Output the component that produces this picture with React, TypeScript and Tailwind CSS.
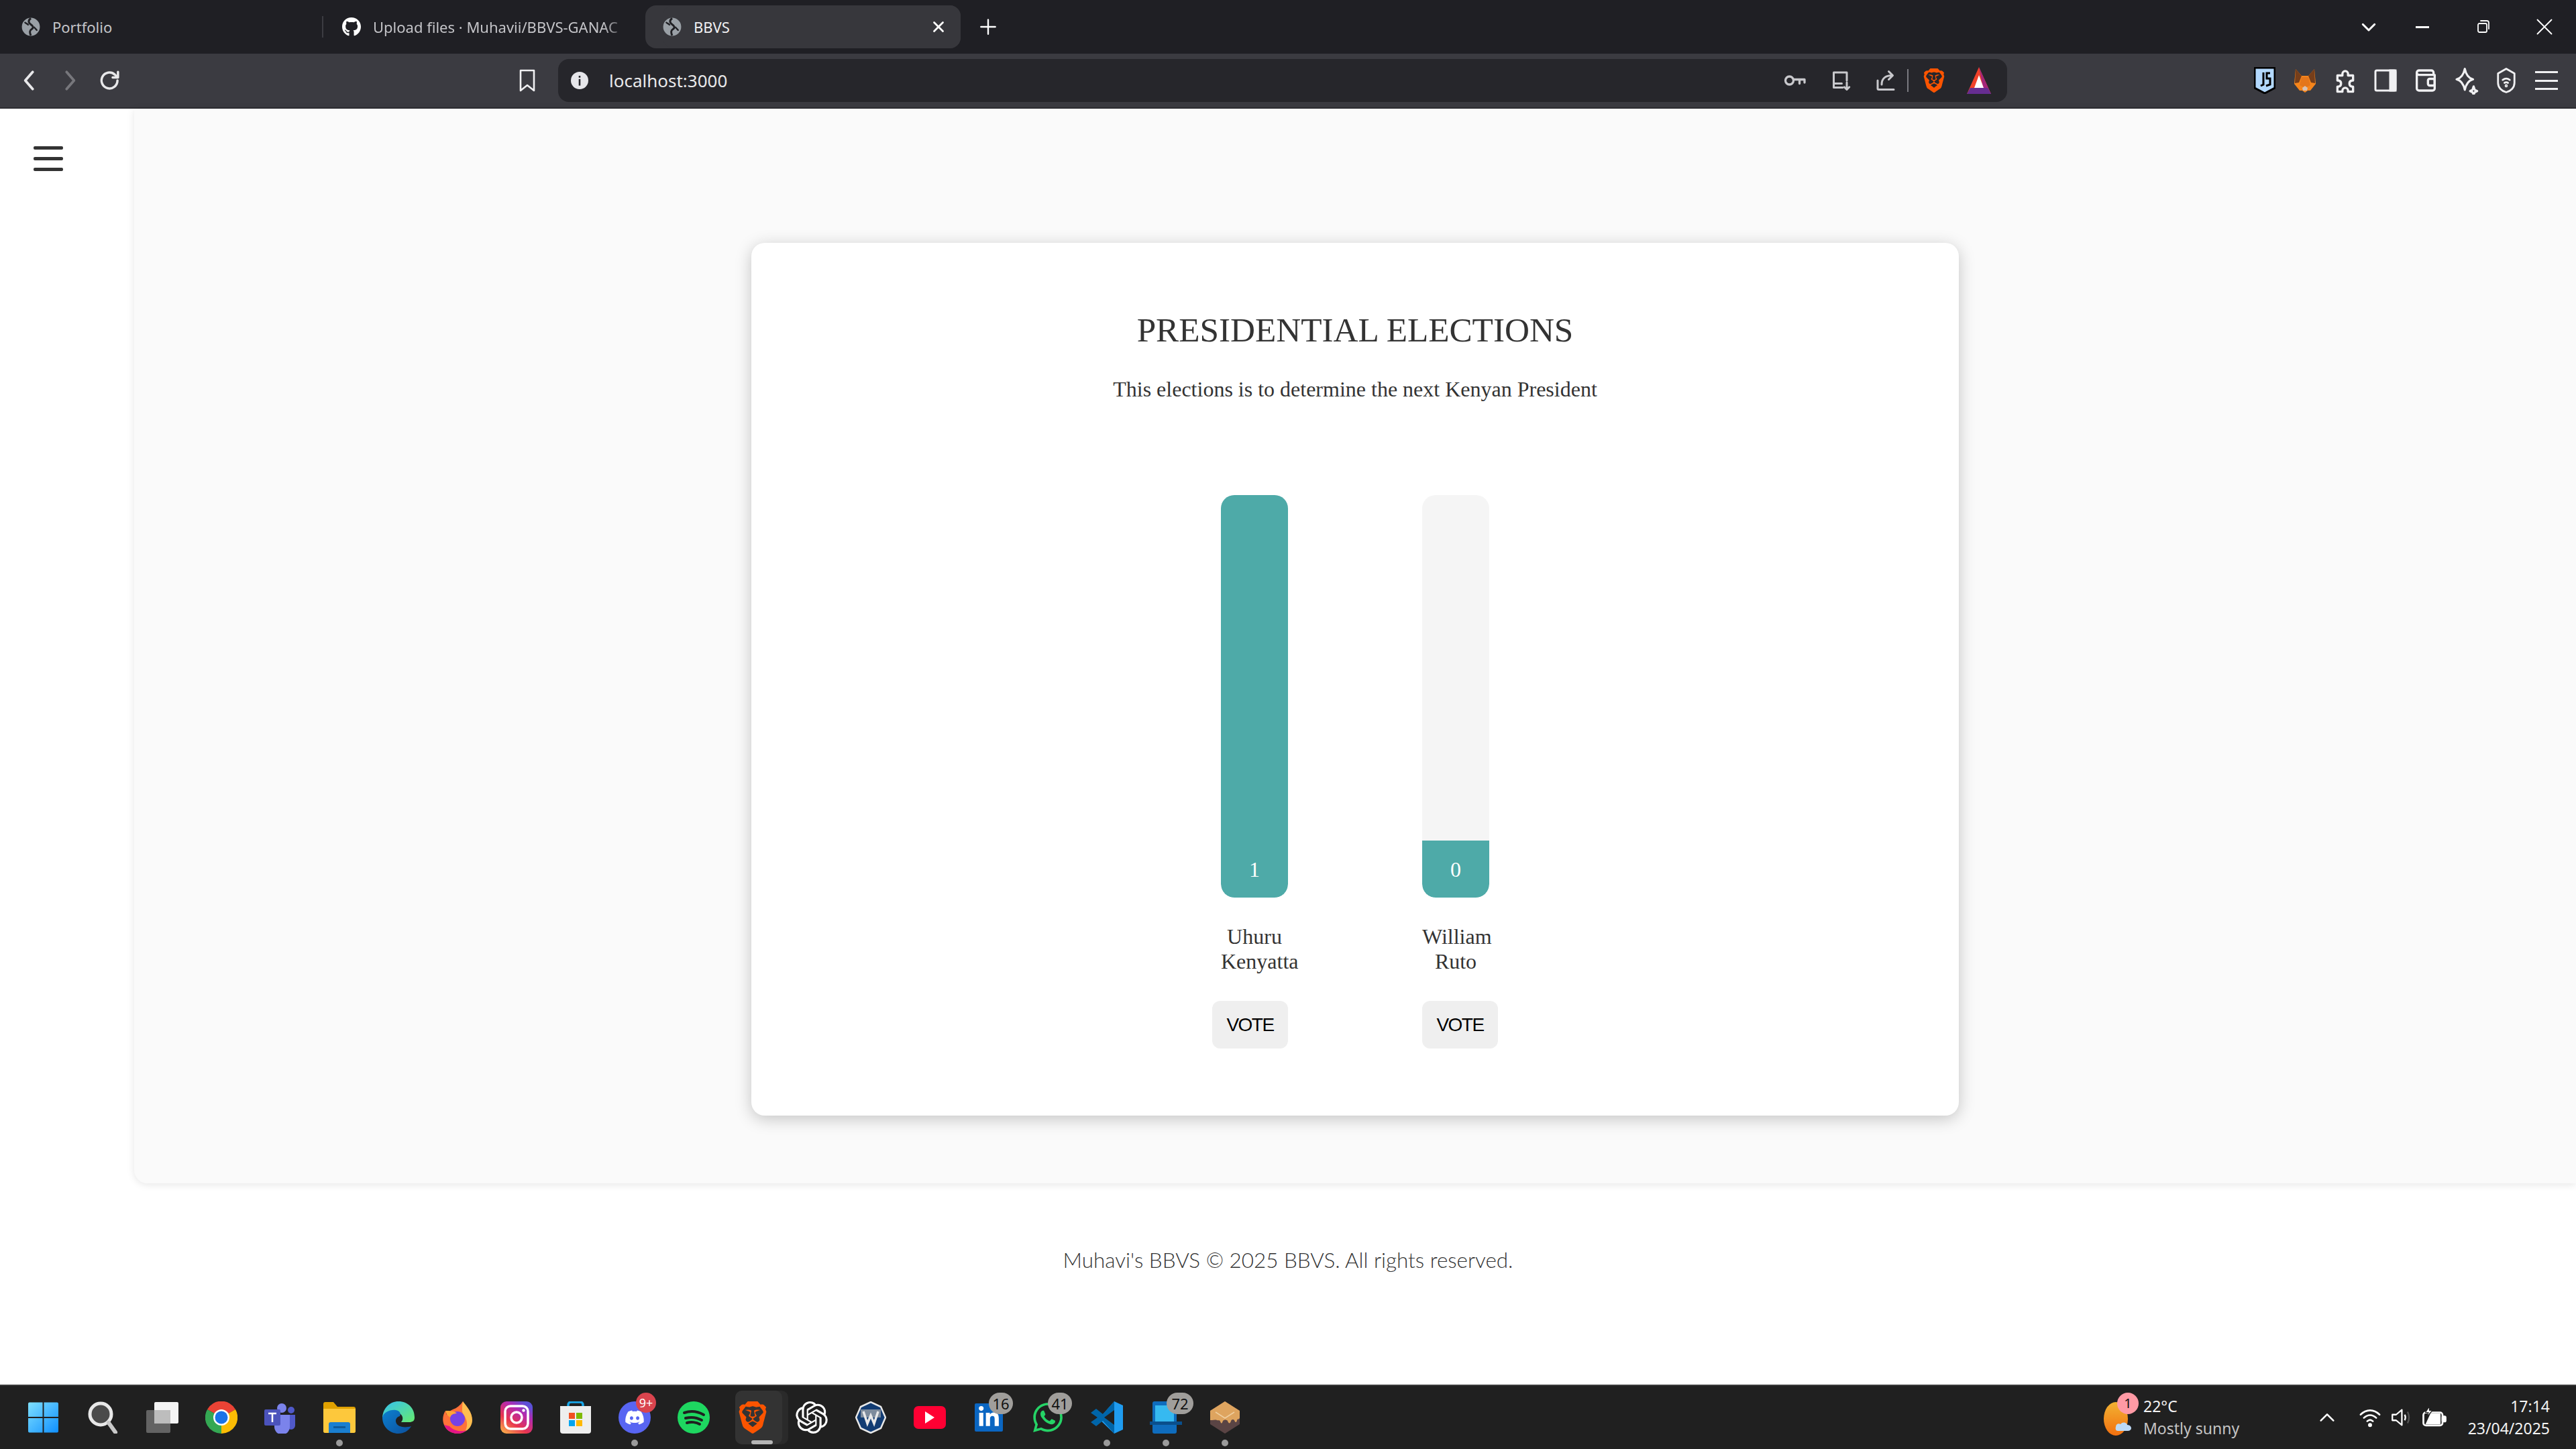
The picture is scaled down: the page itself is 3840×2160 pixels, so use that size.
import React from "react";
import { FaGithub, FaDiscord, FaLinkedinIn, FaWhatsapp } from "react-icons/fa";
import { SiOpenai, SiBrave } from "react-icons/si";

const ui = { fontFamily: '"Noto Sans", "Open Sans", sans-serif' };
const serif = { fontFamily: '"Liberation Serif", serif' };

function Globe({ c = "#9aa0a6" }: { c?: string }) {
  return (
    <svg width="28" height="28" viewBox="0 0 24 24">
      <circle cx="12" cy="12" r="11.5" fill={c} />
      <path d="M12 1C8 4 9 7 12 9c3 2 4 4 1 6-2 1-3 4-1 8" fill="none" stroke="#202024" strokeWidth="2.6" />
      <path d="M4 6c2 2 4 2 5 4M20 17c-1-2-3-3-4-5" fill="none" stroke="#202024" strokeWidth="2" />
    </svg>
  );
}

function Stroke({ children, w = 36, vb = 24, c = "#e8e8ea", sw = 2 }: { children: React.ReactNode; w?: number; vb?: number; c?: string; sw?: number }) {
  return (
    <svg width={w} height={w} viewBox={`0 0 ${vb} ${vb}`} fill="none" stroke={c} strokeWidth={sw} strokeLinecap="round" strokeLinejoin="round">
      {children}
    </svg>
  );
}

function Tab({ w, active, icon, text, fade, close }: { w: string; active?: boolean; icon: React.ReactNode; text: string; fade?: boolean; close?: boolean }) {
  return (
    <div className={`${w} h-[64px] flex items-center shrink-0 rounded-[16px] pr-[20px] ${active ? "bg-[#37373c]" : ""}`}>
      <div className="w-[28px] h-[28px] shrink-0 flex items-center justify-center">{icon}</div>
      <span
        className={`ml-[18px] text-[22px] whitespace-nowrap flex-1 ${active ? "text-[#f0f0f2]" : "text-[#c4c4c8]"}`}
        style={fade ? { ...ui, maskImage: "linear-gradient(90deg,#000 90%,transparent)" } : ui}
      >
        {text}
      </span>
      {close && (
        <Stroke w={26} sw={2.6} c="#ffffff">
          <path d="M6 6l12 12M18 6L6 18" />
        </Stroke>
      )}
    </div>
  );
}

function TB({ children, cls = "" }: { children: React.ReactNode; cls?: string }) {
  return <div className={`w-[60px] h-[60px] shrink-0 flex items-center justify-center ${cls}`}>{children}</div>;
}

function Candidate({ name, votes, fill, align }: { name: string; votes: string; fill: string; align: string }) {
  return (
    <div className="w-[100px] flex flex-col" style={serif}>
      <div className="h-[600px] w-[100px] rounded-[20px] bg-[#f5f5f5] overflow-hidden flex flex-col justify-end">
        <div className={`${fill} bg-[#4eaaa8] rounded-b-[20px] flex flex-col justify-end text-[32px] text-white`}>
          <div className="h-[85px] flex items-center justify-center">{votes}</div>
        </div>
      </div>
      <div className="mt-[40px] text-center text-[32px] leading-[37px] text-[#333333]">{name}</div>
      <button className={`mt-[40px] w-[113px] h-[71px] rounded-[12px] bg-[#efefef] text-[28px] tracking-[-1.5px] text-black shrink-0 ${align}`} style={{ fontFamily: '"Liberation Sans", sans-serif' }}>
        VOTE
      </button>
    </div>
  );
}

function Item({ children, dot, badge, badgeCls, active }: { children: React.ReactNode; dot?: boolean; badge?: string; badgeCls?: string; active?: boolean }) {
  return (
    <div className="w-[88px] h-[94px] shrink-0 relative flex items-center justify-center">
      {active && (
        <>
          <div className="absolute left-[18px] top-[7px] w-[79px] h-[80px] rounded-[10px] bg-[#2a2a2a]" />
          <div className="absolute left-[18px] top-[7px] w-[70px] h-[80px] rounded-[10px] bg-[#333333]" />
          <div className="absolute left-[42px] top-[81px] w-[32px] h-[6px] rounded-[3px] bg-[#b5b5b5]" />
        </>
      )}
      <div className="relative w-[48px] h-[48px] flex items-center justify-center">{children}</div>
      {dot && <div className="absolute left-[39px] top-[80px] w-[10px] h-[10px] rounded-full bg-[#9a9a9a]" />}
      {badge && (
        <div className={`absolute top-[10px] rounded-full flex items-center justify-center ${badgeCls}`} style={ui}>
          {badge}
        </div>
      )}
    </div>
  );
}

export default function App() {
  return (
    <div className="w-[3840px] h-[2160px] flex flex-col overflow-hidden bg-white">
      {/* tab strip */}
      <div className="h-[80px] shrink-0 bg-[#1f1f24] flex items-center pl-[32px]">
        <Tab w="w-[448px]" icon={<Globe />} text="Portfolio" />
        <div className="w-[2px] h-[32px] bg-[#3c3c42] shrink-0" />
        <div className="w-[480px] shrink-0 pl-[28px] pr-[24px]">
          <Tab w="w-full !pr-0" icon={<FaGithub size={32} color="#fff" />} text="Upload files · Muhavii/BBVS-GANAC" fade />
        </div>
        <div className="w-[470px] shrink-0 pl-[26px] rounded-[16px] bg-[#37373c]">
          <Tab w="w-full" active icon={<Globe />} text="BBVS" close />
        </div>
        <div className="ml-[21px] w-[40px] h-[40px] flex items-center justify-center">
          <Stroke w={32} c="#fff" sw={1.8}>
            <path d="M12 4v16M4 12h16" />
          </Stroke>
        </div>
        <div className="ml-auto flex items-center pr-[33px]">
          <div className="w-[40px] flex justify-center mr-[50px]">
            <Stroke w={30} c="#fff" sw={2.4}>
              <path d="M5 9l7 7 7-7" />
            </Stroke>
          </div>
          <div className="w-[20px] h-[3px] bg-white mr-[69px]" />
          <div className="mr-[65px]">
            <Stroke w={24} c="#fff" sw={1.8}>
              <rect x="4" y="7" width="13" height="13" rx="2" />
              <path d="M8 3h9a3 3 0 0 1 3 3v9" />
            </Stroke>
          </div>
          <Stroke w={28} c="#fff" sw={1.6}>
            <path d="M3 3l18 18M21 3L3 21" />
          </Stroke>
        </div>
      </div>

      {/* toolbar */}
      <div className="h-[82px] shrink-0 bg-[#3b3b41] border-b-2 border-[#2e2e33] flex items-center pl-[14px]">
        <TB>
          <Stroke w={38} sw={2.4}>
            <path d="M15 4l-7 8 7 8" />
          </Stroke>
        </TB>
        <TB>
          <Stroke w={38} c="#77777c" sw={2.4}>
            <path d="M9 4l7 8-7 8" />
          </Stroke>
        </TB>
        <TB>
          <Stroke w={38} sw={2.2}>
            <path d="M19 12a7.5 7.5 0 1 1-2.5-5.6L19 9" />
            <path d="M19.5 4v5.2h-5" />
          </Stroke>
        </TB>
        <TB cls="ml-[562px]">
          <svg width="26" height="34" viewBox="0 0 26 34" fill="none" stroke="#f0f0f2" strokeWidth="2.6" strokeLinejoin="round">
            <path d="M3 2h20v30l-10-8-10 8z" />
          </svg>
        </TB>
        <div className="ml-[16px] w-[2160px] h-[64px] rounded-[16px] bg-[#26262b] flex items-center pl-[19px] pr-[24px]">
          <svg width="26" height="26" viewBox="0 0 24 24">
            <circle cx="12" cy="12" r="12" fill="#e6e6ea" />
            <rect x="10.8" y="10" width="2.4" height="9" fill="#26262b" />
            <rect x="10.8" y="5.5" width="2.4" height="2.6" fill="#26262b" />
          </svg>
          <span className="ml-[31px] text-[26px] text-[#e8e8ea]" style={ui}>localhost:3000</span>
          <div className="ml-auto flex items-center">
            <Stroke w={36} c="#c8c8cc" sw={2.2}>
              <circle cx="7" cy="12" r="4" />
              <path d="M11 11h11v3M17 11v4" />
            </Stroke>
            <div className="ml-[33px]">
              <Stroke w={36} c="#c8c8cc" sw={2}>
                <path d="M14 19H5V4h13v8M5 15h8M18 14v7M15.5 18.5L18 21l2.5-2.5" />
              </Stroke>
            </div>
            <div className="ml-[31px]">
              <Stroke w={36} c="#c8c8cc" sw={2}>
                <path d="M4 12v8a1 1 0 0 0 1 1h15M8 16c0-6 4-9 10-9M15 3l4 4-4 4" />
              </Stroke>
            </div>
            <div className="w-[2px] h-[34px] bg-[#7a7a80] ml-[14px]" />
            <div className="ml-[20px] w-[36px] h-[48px] flex items-center justify-center">
              <SiBrave size={42} color="#fb5400" />
            </div>
            <svg className="ml-[31px]" width="36" height="40" viewBox="0 0 36 40">
              <path d="M18 0L36 40H0z" fill="#f0412a" />
              <path d="M18 0L36 40H26z" fill="#a3267a" />
              <path d="M0 40l5-9h26l5 9z" fill="#662d91" />
              <path d="M18 12l7 19H11z" fill="#fff" />
            </svg>
          </div>
        </div>
        <div className="ml-[354px] flex items-center">
          <TB>
            <svg width="32" height="40" viewBox="0 0 32 40">
              <path d="M1 1h30v30L16 39 1 31z" fill="#b3d9ff" stroke="#000" strokeWidth="3" />
              <path d="M14 8v18l-4 2M24 9h-5v8h5v9l-6 2" fill="none" stroke="#000" strokeWidth="3" />
            </svg>
          </TB>
          <TB>
            <svg width="34" height="38" viewBox="0 0 34 38">
              <path d="M3 2l9 10h10l9-10 2 22-8 10h-4l-4 3-4-3H9L1 24z" fill="#f6851b" />
              <path d="M3 2l9 10-4 10-6 1zM31 2l-9 10 4 10 6 1z" fill="#763e1a" />
              <path d="M12 14h10l3 12-8 4-8-4z" fill="#e4761b" />
              <path d="M13 30l4-3 4 3-1 4h-6z" fill="#d7c1b3" />
            </svg>
          </TB>
          <TB>
            <Stroke w={40} sw={2} c="#f0f0f2">
              <path d="M9.5 6a2.5 2.5 0 0 1 5 0v1.5H19v4.5h-1a2.8 2.8 0 0 0 0 5.5h1V22h-4.5v-1a2.5 2.5 0 0 0-5 0v1H5v-4.5h1a2.8 2.8 0 0 0 0-5.5H5V7.5h4.5z" />
            </Stroke>
          </TB>
          <TB>
            <svg width="34" height="34" viewBox="0 0 34 34" fill="none" stroke="#f0f0f2" strokeWidth="3">
              <rect x="2" y="2" width="30" height="30" rx="2" />
              <rect x="24" y="2" width="8" height="30" fill="#f0f0f2" />
            </svg>
          </TB>
          <TB>
            <Stroke w={40} sw={2} c="#f0f0f2">
              <path d="M19 7H6a2 2 0 0 1 0-4h11a2 2 0 0 1 2 2zM4 5v14a2 2 0 0 0 2 2h12a2 2 0 0 0 2-2V7" />
              <rect x="14" y="10.5" width="6" height="6" rx="1.5" />
            </Stroke>
          </TB>
          <TB>
            <Stroke w={42} sw={1.8} c="#f0f0f2">
              <path d="M11 2c1 5 3 8 7 9-4 1-6 4-7 9-1-5-3-8-7-9 4-1 6-4 7-9zM18.5 17l1 3 2 1-2 1-1 2-1-2-2-1 2-1z" />
            </Stroke>
          </TB>
          <TB>
            <Stroke w={42} sw={1.6} c="#f0f0f2">
              <path d="M12 2l7 4v8c0 4-3 7-7 8-4-1-7-4-7-8V6z" />
              <path d="M9 11.5c2-1.5 4-1.5 6 0M10.5 14c1-.7 2-.7 3 0" />
              <circle cx="12" cy="16.5" r="0.5" />
            </Stroke>
          </TB>
          <TB>
            <div className="w-[34px] h-[28px] flex flex-col justify-between">
              <div className="h-[3px] bg-[#f0f0f2]" />
              <div className="h-[3px] bg-[#f0f0f2]" />
              <div className="h-[3px] bg-[#f0f0f2]" />
            </div>
          </TB>
        </div>
      </div>

      {/* page */}
      <div className="h-[1602px] shrink-0 flex">
        <div className="w-[200px] shrink-0 pt-[56px] pl-[50px]">
          <div className="w-[44px] flex flex-col gap-[11px]">
            <div className="h-[5px] rounded-[2px] bg-[#333333]" />
            <div className="h-[5px] rounded-[2px] bg-[#333333]" />
            <div className="h-[5px] rounded-[2px] bg-[#333333]" />
          </div>
        </div>
        <div className="flex-1 bg-[#fafafa] rounded-bl-[20px] shadow-[0_2px_12px_rgba(0,0,0,0.1)] pt-[200px] flex justify-center">
          <div className="w-[1800px] h-[1301px] bg-white rounded-[20px] shadow-[0_5px_25px_rgba(0,0,0,0.22)] flex flex-col items-center pt-[96px]" style={serif}>
            <h1 className="text-[51.2px] leading-[68px] text-[#333333]">PRESIDENTIAL ELECTIONS</h1>
            <p className="mt-[36px] text-[32px] leading-[37px] text-[#333333]">This elections is to determine the next Kenyan President</p>
            <div className="mt-[139px] flex justify-center gap-[200px]">
              <Candidate name="Uhuru Kenyatta" votes="1" fill="h-full" align="self-end" />
              <Candidate name="William Ruto" votes="0" fill="h-[85px]" align="self-start" />
            </div>
          </div>
        </div>
      </div>

      {/* footer */}
      <div className="flex-1 flex justify-center pt-[94px]">
        <span className="text-[31.4px] leading-[40px] font-light text-[#333333]" style={{ fontFamily: 'Lato, sans-serif' }}>
          Muhavi's BBVS © 2025 BBVS. All rights reserved.
        </span>
      </div>

      {/* taskbar */}
      <div className="h-[96px] shrink-0 bg-[#202020] border-t-2 border-[#3a3a3a] flex items-center pl-[22px]">
        <Item>
          <svg width="46" height="46" viewBox="0 0 46 46" className="mr-[3px]">
            <defs>
              <linearGradient id="w1" x1="0" y1="0" x2="1" y2="1">
                <stop offset="0" stopColor="#7fe0ff" />
                <stop offset="1" stopColor="#0f8fff" />
              </linearGradient>
            </defs>
            <path d="M0 2a2 2 0 0 1 2-2h20v22H0zM24 0h20a2 2 0 0 1 2 2v20H24zM0 24h22v22H2a2 2 0 0 1-2-2zM24 24h22v20a2 2 0 0 1-2 2H24z" fill="url(#w1)" />
          </svg>
        </Item>
        <Item>
          <svg width="46" height="48" viewBox="0 0 46 48">
            <circle cx="19" cy="19" r="16" fill="#4a4a4a" stroke="#e8e8e8" strokeWidth="5" />
            <path d="M31 32l10 14" stroke="#c9c9c9" strokeWidth="6" strokeLinecap="round" />
          </svg>
        </Item>
        <Item>
          <svg width="48" height="46" viewBox="0 0 48 46">
            <rect x="12" y="0" width="36" height="32" rx="2" fill="#f4f4f4" />
            <rect x="0" y="12" width="36" height="34" rx="2" fill="#6a6a6a" fillOpacity="0.9" />
            <rect x="12" y="12" width="24" height="20" fill="#bdbdbd" />
          </svg>
        </Item>
        <Item>
          <svg width="48" height="48" viewBox="0 0 48 48">
            <path d="M24 24L3 12A24 24 0 0 1 45 12z" fill="#ea4335" />
            <path d="M24 24L3 12A24 24 0 0 0 24 48z" fill="#34a853" />
            <path d="M24 24L45 12A24 24 0 0 1 24 48z" fill="#fbbc04" />
            <circle cx="24" cy="24" r="12" fill="#fff" />
            <circle cx="24" cy="24" r="9.5" fill="#1a73e8" />
          </svg>
        </Item>
        <Item>
          <svg width="48" height="48" viewBox="0 0 48 48">
            <circle cx="26" cy="10" r="7" fill="#7b83eb" />
            <circle cx="40" cy="13" r="5" fill="#5059c9" />
            <path d="M32 20h14v16a6 6 0 0 1-12 0z" fill="#5059c9" />
            <path d="M15 20h23v18a11 11 0 0 1-23 0z" fill="#7b83eb" />
            <rect x="0" y="12" width="24" height="24" rx="2" fill="#4b53bc" />
            <path d="M6 18h12M12 18v13" stroke="#fff" strokeWidth="2.5" />
          </svg>
        </Item>
        <Item dot>
          <svg width="48" height="46" viewBox="0 0 48 46">
            <path d="M0 3a3 3 0 0 1 3-3h12l6 7h24a3 3 0 0 1 3 3v33a3 3 0 0 1-3 3H3a3 3 0 0 1-3-3z" fill="#e0a100" />
            <path d="M0 10h48v33a3 3 0 0 1-3 3H3a3 3 0 0 1-3-3z" fill="#fdc83c" />
            <path d="M8 46V33a3 3 0 0 1 3-3h26a3 3 0 0 1 3 3v13z" fill="#1a7fd0" />
            <rect x="15" y="36" width="18" height="3" fill="#0f5a9a" />
          </svg>
        </Item>
        <Item>
          <svg width="48" height="48" viewBox="0 0 48 48">
            <defs>
              <linearGradient id="e1" x1="0" y1="0" x2="1" y2="1">
                <stop offset="0" stopColor="#35c1f1" />
                <stop offset="1" stopColor="#66eb6e" />
              </linearGradient>
              <linearGradient id="e2" x1="0" y1="0" x2="1" y2="1">
                <stop offset="0" stopColor="#0c80d0" />
                <stop offset="1" stopColor="#0c4f9c" />
              </linearGradient>
            </defs>
            <path d="M24 0c14 0 24 10 24 24 0 5-3 7-8 7H28c4-4 3-12-5-14C13 16 5 20 0 24 1 10 11 0 24 0z" fill="url(#e1)" />
            <path d="M0 24c2-8 11-12 20-11 6 1 8 5 6 9-4 1-8 5-5 11 3 5 12 7 22 4-4 7-11 11-19 11C11 48 0 38 0 24z" fill="url(#e2)" />
          </svg>
        </Item>
        <Item>
          <svg width="44" height="48" viewBox="0 0 44 48">
            <path d="M30 0c2 6 6 10 10 15 4 6 4 13 2 19-3 8-11 14-20 14S5 43 2 35C-1 28 0 20 4 14l2 6c2-4 5-6 9-8 6-2 11-6 15-12z" fill="#ff7139" />
            <path d="M30 0c6 8 14 16 14 28 0 8-5 14-11 17 4-6 4-14 1-20-2-5-5-6-5-12 0-5 0-9 1-13z" fill="#ffbd4f" />
            <circle cx="22" cy="26" r="11" fill="#7542e5" />
            <path d="M4 14c6 0 14 0 17 4-5 0-9 2-10 6-3-2-6-5-7-10z" fill="#ffa436" />
            <path d="M2 35c3 8 11 13 20 13 6 0 10-2 14-5-8 3-20 1-26-6z" fill="#e31587" />
          </svg>
        </Item>
        <Item>
          <svg width="48" height="48" viewBox="0 0 48 48">
            <defs>
              <linearGradient id="i1" x1="0" y1="1" x2="0.7" y2="0">
                <stop offset="0" stopColor="#fdc14a" />
                <stop offset="0.4" stopColor="#e8344f" />
                <stop offset="0.75" stopColor="#b32bb0" />
                <stop offset="1" stopColor="#5b51d8" />
              </linearGradient>
            </defs>
            <rect width="48" height="48" rx="9" fill="url(#i1)" />
            <rect x="7" y="7" width="34" height="34" rx="8" fill="none" stroke="#fff" strokeWidth="3.5" />
            <circle cx="24" cy="24" r="8" fill="none" stroke="#fff" strokeWidth="3.5" />
            <circle cx="34.5" cy="13.5" r="2.2" fill="#fff" />
          </svg>
        </Item>
        <Item>
          <svg width="46" height="48" viewBox="0 0 46 48">
            <path d="M12 11V5a4 4 0 0 1 4-4h14a4 4 0 0 1 4 4v6" fill="none" stroke="#18a6e8" strokeWidth="3.5" />
            <path d="M0 7h46v37a4 4 0 0 1-4 4H4a4 4 0 0 1-4-4z" fill="#eeeeee" />
            <rect x="13" y="17" width="9" height="9" fill="#f25022" />
            <rect x="24" y="17" width="9" height="9" fill="#7fba00" />
            <rect x="13" y="28" width="9" height="9" fill="#00a4ef" />
            <rect x="24" y="28" width="9" height="9" fill="#ffb900" />
          </svg>
        </Item>
        <Item dot badge="9+" badgeCls="left-[46px] w-[30px] h-[30px] bg-[#d9444e] text-white text-[18px] leading-none">
          <div className="w-[48px] h-[48px] rounded-full bg-[#5865f2] flex items-center justify-center">
            <FaDiscord size={30} color="#fff" />
          </div>
        </Item>
        <Item>
          <svg width="48" height="48" viewBox="0 0 48 48">
            <circle cx="24" cy="24" r="24" fill="#1ed760" />
            <path d="M10 17c9-3 20-2 29 3M12 25c8-2 17-1 24 3M14 32c6-2 14-1 19 2" fill="none" stroke="#202020" strokeWidth="4" strokeLinecap="round" />
          </svg>
        </Item>
        <Item active>
          <SiBrave size={48} color="#fb5400" />
        </Item>
        <Item>
          <SiOpenai size={48} color="#fff" />
        </Item>
        <Item>
          <svg width="46" height="48" viewBox="0 0 46 48">
            <path d="M23 1l15 7 7 16-7 16-15 7-15-7-7-16 7-16z" fill="#123c73" stroke="#e8e8e8" strokeWidth="2.5" />
            <path d="M8 12h30v12H8z" fill="#7d8b9c" />
            <path d="M12 15l6 18 5-12 5 12 6-18" fill="none" stroke="#e8e8e8" strokeWidth="3.5" />
          </svg>
        </Item>
        <Item>
          <div className="w-[48px] h-[34px] rounded-[7px] bg-[#ff0033] flex items-center justify-center">
            <svg width="14" height="18" viewBox="0 0 14 18">
              <path d="M0 0l14 9-14 9z" fill="#fff" />
            </svg>
          </div>
        </Item>
        <Item badge="16" badgeCls="left-[44px] w-[36px] h-[32px] bg-[#a09e9b] text-[#111] text-[22px] leading-none">
          <div className="w-[42px] h-[42px] bg-[#0a66c2] rounded-[2px] flex items-center justify-center">
            <FaLinkedinIn size={34} color="#fff" />
          </div>
        </Item>
        <Item badge="41" badgeCls="left-[44px] w-[36px] h-[32px] bg-[#a09e9b] text-[#111] text-[22px] leading-none">
          <FaWhatsapp size={50} color="#25d366" />
        </Item>
        <Item dot>
          <svg width="48" height="48" viewBox="0 0 48 48">
            <path d="M35 0l13 6v36l-13 6L12 26z" fill="#1f9cf0" />
            <path d="M35 0v48L18 29 8 37l-8-6 10-7L0 17l8-6 10 8z" fill="#0065a9" />
            <path d="M35 13L20 24l15 11z" fill="#202020" />
          </svg>
        </Item>
        <Item dot badge="72" badgeCls="left-[45px] w-[40px] h-[32px] bg-[#a09e9b] text-[#111] text-[22px] leading-none">
          <svg width="48" height="48" viewBox="0 0 48 48">
            <rect x="4" y="0" width="36" height="48" rx="3" fill="#0f6cbd" />
            <rect x="8" y="6" width="28" height="26" fill="#36b9f0" />
            <rect x="0" y="30" width="48" height="5" fill="#0a4f8c" />
          </svg>
        </Item>
        <Item dot>
          <svg width="44" height="48" viewBox="0 0 44 48">
            <path d="M22 0l22 14v20L22 48 0 34V14z" fill="#5a4444" />
            <path d="M22 0l22 14v11c-2 3-3 0-4 3-1 5-3 3-4 0-2-2-4-1-5 1-1 5-4 4-5 0-2-2-5-2-7 0-1 3-2 6-4 1-1-3-3-1-5-2-3-1-5 0-7 0-1 0-3 0-3 0V14z" fill="#dea45f" />
            <path d="M8 16l14 9 14-9" fill="none" stroke="#efcfa0" strokeWidth="1.5" />
          </svg>
        </Item>

        {/* tray */}
        <div className="ml-[1266px] w-[300px] flex items-center relative text-[#f2f2f2]" style={ui}>
          <svg width="42" height="60" viewBox="0 0 42 60" className="shrink-0 mt-[4px]">
            <defs>
              <linearGradient id="s1" x1="0" y1="0" x2="0" y2="1">
                <stop offset="0" stopColor="#f2b233" />
                <stop offset="1" stopColor="#f2700f" />
              </linearGradient>
            </defs>
            <ellipse cx="18" cy="30" rx="18" ry="25" fill="url(#s1)" />
            <path d="M18 42c0-4 4-6 7-4 3-4 9-3 10 1 4 0 6 3 6 5s-2 4-5 4H21c-3 0-4-3-3-6z" fill="#bcd9f5" />
          </svg>
          <div className="absolute left-[20px] top-[-4px] w-[32px] h-[32px] rounded-full bg-[#ff9aa5] text-[#111] text-[20px] flex items-center justify-center leading-none">1</div>
          <div className="ml-[17px] flex flex-col">
            <span className="text-[23px] leading-[33px]">22°C</span>
            <span className="text-[23px] leading-[33px] text-[#c4c4c4]">Mostly sunny</span>
          </div>
        </div>
        <div className="w-[66px] flex justify-center">
          <Stroke w={28} c="#fff" sw={2.2}>
            <path d="M4 16l8-8 8 8" />
          </Stroke>
        </div>
        <div className="ml-[8px] w-[46px] flex justify-center">
          <svg width="34" height="34" viewBox="0 0 24 24" fill="none" stroke="#fff" strokeWidth="1.8" strokeLinecap="round">
            <path d="M2 9c6-6 14-6 20 0M5.5 12.5c4-4 9-4 13 0M9 16c2-2 4-2 6 0" />
            <circle cx="12" cy="20" r="1.2" fill="#fff" />
          </svg>
        </div>
        <div className="w-[46px] flex justify-center">
          <svg width="34" height="34" viewBox="0 0 24 24" fill="none" stroke="#fff" strokeWidth="1.6" strokeLinejoin="round">
            <path d="M3 9v6h4l6 5V4L7 9z" />
            <path d="M16 9c1 2 1 4 0 6" />
            <path d="M19 6c2 4 2 8 0 12" stroke="#555" />
          </svg>
        </div>
        <div className="ml-[4px] w-[46px] flex justify-center">
          <svg width="36" height="36" viewBox="0 0 24 24" fill="none" stroke="#fff" strokeWidth="1.8" strokeLinejoin="round">
            <rect x="1" y="7" width="19" height="13" rx="2.5" />
            <rect x="20" y="11" width="3" height="5" rx="1" fill="#fff" />
            <path d="M3 19L8 8h10v11z" fill="#fff" stroke="none" />
            <path d="M7 1L3 7h3l-2 5 6-7H7z" fill="#fff" stroke="#202020" strokeWidth="0.8" />
          </svg>
        </div>
        <div className="ml-auto pr-[39px] flex flex-col items-end text-[23px] leading-[33px] text-[#f2f2f2]" style={ui}>
          <span>17:14</span>
          <span>23/04/2025</span>
        </div>
      </div>
    </div>
  );
}
